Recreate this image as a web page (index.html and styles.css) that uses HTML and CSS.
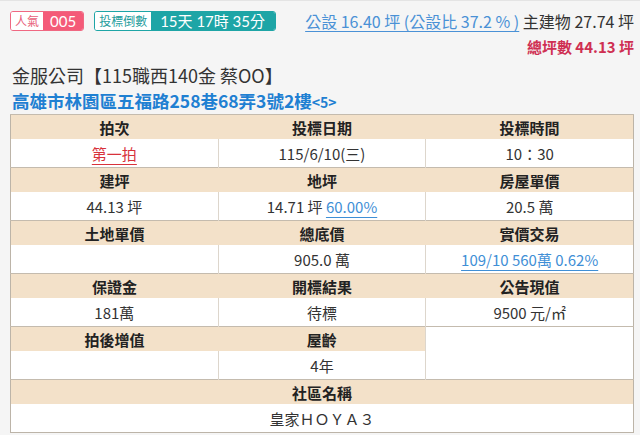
FILE: index.html
```html
<!DOCTYPE html>
<html lang="zh-Hant">
<head>
<meta charset="utf-8">
<link rel="stylesheet" href="styles.css">
</head>
<body>
<div class="page">
  <div class="top">
    <div class="badges">
      <span class="badge pink"><span class="lab">人氣</span><span class="val">005</span></span>
      <span class="badge teal"><span class="lab">投標倒數</span><span class="val">15天 17時 35分</span></span>
    </div>
    <div class="stats">
      <div class="line1"><a class="pub">公設 16.40 坪 (公設比 37.2 % )</a> 主建物 27.74 坪</div>
      <div class="line2">總坪數 44.13 坪</div>
    </div>
  </div>
  <div class="title">金服公司【115職西140金 蔡OO】</div>
  <div class="addr">高雄市林園區五福路258巷68弄3號2樓<span class="small">&lt;5&gt;</span></div>
  <table class="info">
    <colgroup><col class="c"><col class="c"><col class="c"></colgroup>
    <tr class="hd"><td>拍次</td><td>投標日期</td><td>投標時間</td></tr>
    <tr class="dt"><td><a class="red">第一拍</a></td><td>115/6/10(三)</td><td>10：30</td></tr>
    <tr class="hd"><td>建坪</td><td>地坪</td><td>房屋單價</td></tr>
    <tr class="dt"><td>44.13 坪</td><td>14.71 坪 <a class="blue">60.00%</a></td><td>20.5 萬</td></tr>
    <tr class="hd"><td>土地單價</td><td>總底價</td><td>實價交易</td></tr>
    <tr class="dt"><td></td><td>905.0 萬</td><td><a class="blue">109/10 560萬 0.62%</a></td></tr>
    <tr class="hd"><td>保證金</td><td>開標結果</td><td>公告現值</td></tr>
    <tr class="dt"><td>181萬</td><td>待標</td><td>9500 元/㎡</td></tr>
    <tr class="hd"><td>拍後增值</td><td>屋齡</td><td class="blank" rowspan="2"></td></tr>
    <tr class="dt"><td></td><td>4年</td></tr>
    <tr class="hd"><td colspan="3">社區名稱</td></tr>
    <tr class="dt"><td colspan="3">皇家ＨＯＹＡ３</td></tr>
  </table>
</div>
</body>
</html>
```

FILE: styles.css
```css
html, body {
  margin: 0;
  padding: 0;
  background: #f5f5f5;
}
body {
  font-family: "Noto Sans CJK TC", "Noto Sans", sans-serif;
  color: #333;
  border-top: 1px solid #e4e4e4;
}
.page {
  padding: 7px 6px 0 10px;
}
.top {
  display: flex;
  justify-content: space-between;
  align-items: flex-start;
}
.badges {
  display: flex;
  gap: 10px;
  padding-top: 3px;
}
.badge {
  display: inline-flex;
  height: 20px;
  border-radius: 3px;
  overflow: hidden;
  box-sizing: border-box;
  border: 1px solid;
}
.badge .lab {
  background: #fff;
  font-size: 12px;
  line-height: 18px;
  padding: 0 4px;
}
.badge .val {
  color: #fff;
  font-size: 15px;
  line-height: 18px;
  font-family: "Lato", "Noto Sans CJK TC", sans-serif;
  padding: 0 7px;
}
.pink { border-color: #f06882; }
.pink .lab { color: #e8607a; }
.pink .val { background: #f45a78; }
.teal { border-color: #1ea5a6; }
.teal .lab { color: #1e9c9c; }
.teal .val { background: #1ea5a6; padding: 0 10px 0 9px; }
.stats {
  text-align: right;
  line-height: 26px;
}
.line1 {
  color: #333;
  font-size: 16px;
}
.pub {
  color: #4a91d6;
  text-decoration: underline;
  text-underline-offset: 3px;
}
.line2 {
  color: #cf2f52;
  font-weight: bold;
  font-size: 15px;
}
.title {
  margin-top: 2px;
  font-size: 18px;
  line-height: 26px;
  color: #333;
  padding-left: 2px;
}
.addr {
  font-size: 17.5px;
  line-height: 26px;
  height: 26px;
  color: #1f80d2;
  font-weight: bold;
  padding-left: 2px;
}
.addr .small {
  font-size: 14px;
  line-height: 1;
}
.info {
  width: 624px;
  border-collapse: collapse;
  table-layout: fixed;
  background: #fff;
  border: 1px solid #bcb4a8;
  font-size: 15px;
}
.info col.c { width: 33.333%; }
.info td {
  text-align: center;
  padding: 0;
}
.hd td {
  height: 24px;
  background: #f3e1c9;
  font-weight: bold;
  color: #222;
  border-top: 1px solid #c4bbae;
}
.hd td.blank {
  background: #fff;
  border-left: 1px solid #ddd6cc;
}
.dt td {
  height: 28px;
  border-left: 1px solid #ddd6cc;
  color: #333;
}
.dt td:first-child { border-left: none; }
.red {
  color: #d8323b;
  text-decoration: underline;
  text-underline-offset: 4px;
}
.blue {
  color: #3f8fd6;
  text-decoration: underline;
  text-underline-offset: 4px;
}
```
